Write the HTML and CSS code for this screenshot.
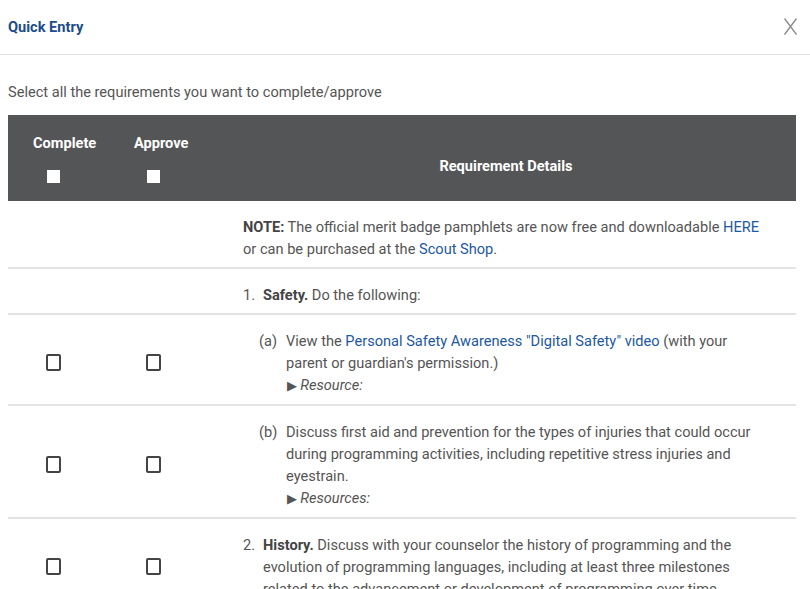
FILE: index.html
```html
<!DOCTYPE html>
<html lang="en">
<head>
    <meta charset="UTF-8">
    <meta name="viewport" content="width=device-width, initial-scale=1.0">
    <title>Quick Entry</title>
    <link rel="stylesheet" href="styles.css">
</head>
<body>
    <div class="modal">
        <div class="modal-header">
            <h1>Quick Entry</h1>
            <button class="close-btn" aria-label="Close">
                <svg width="13" height="17" viewBox="0 0 13 17">
                    <path d="M0.5 0.5 L12.5 16.5 M12.5 0.5 L0.5 16.5" stroke="#8a8a8a" stroke-width="1.3" fill="none"/>
                </svg>
            </button>
        </div>

        <p class="intro">Select all the requirements you want to complete/approve</p>

        <table class="req-table">
            <thead>
                <tr>
                    <th class="col-check">
                        <div class="th-label">Complete</div>
                        <span class="head-box"></span>
                    </th>
                    <th class="col-check col-approve">
                        <div class="th-label">Approve</div>
                        <span class="head-box"></span>
                    </th>
                    <th class="col-details">Requirement Details</th>
                </tr>
            </thead>
            <tbody>
                <tr>
                    <td></td>
                    <td></td>
                    <td class="details"><b>NOTE:</b> The official merit badge pamphlets are now free and downloadable <a href="#">HERE</a><br>or can be purchased at the <a href="#">Scout Shop</a>.</td>
                </tr>
                <tr>
                    <td></td>
                    <td></td>
                    <td class="details">
                        <div class="req"><span class="num">1.</span><div><b>Safety.</b> Do the following:</div></div>
                    </td>
                </tr>
                <tr>
                    <td class="cell-check"><span class="box"></span></td>
                    <td class="cell-check"><span class="box"></span></td>
                    <td class="details sub">
                        <div class="req"><span class="num">(a)</span><div>View the <a href="#">Personal Safety Awareness "Digital Safety" video</a> (with your parent or guardian's permission.)
                            <div class="resource">&#9654; <i>Resource:</i></div></div></div>
                    </td>
                </tr>
                <tr>
                    <td class="cell-check"><span class="box"></span></td>
                    <td class="cell-check"><span class="box"></span></td>
                    <td class="details sub">
                        <div class="req"><span class="num">(b)</span><div>Discuss first aid and prevention for the types of injuries that could occur during programming activities, including repetitive stress injuries and eyestrain.
                            <div class="resource">&#9654; <i>Resources:</i></div></div></div>
                    </td>
                </tr>
                <tr>
                    <td class="cell-check"><span class="box"></span></td>
                    <td class="cell-check"><span class="box"></span></td>
                    <td class="details">
                        <div class="req"><span class="num">2.</span><div><b>History.</b> Discuss with your counselor the history of programming and the evolution of programming languages, including at least three milestones related to the advancement or development of programming over time.</div></div>
                    </td>
                </tr>
            </tbody>
        </table>
    </div>
</body>
</html>
```

FILE: styles.css
```css
* {
    margin: 0;
    padding: 0;
    box-sizing: border-box;
}

body {
    background-color: #fff;
    font-family: Roboto, "Liberation Sans", Arial, sans-serif;
    font-size: 14.6px;
    color: #555;
    overflow: hidden;
}

.modal {
    width: 810px;
}

.modal-header {
    height: 55px;
    display: flex;
    align-items: center;
    justify-content: space-between;
    padding: 0 13px 1px 8px;
    border-bottom: 1px solid #e2e2e2;
}

.modal-header h1 {
    font-size: 14.6px;
    font-weight: bold;
    color: #1c4c8c;
}

.close-btn {
    background: none;
    border: none;
    display: flex;
    cursor: pointer;
}

.intro {
    padding: 27px 8px 0;
    line-height: 20px;
    height: 60px;
}

.req-table {
    width: 788px;
    margin-left: 8px;
    border-collapse: collapse;
}

.req-table thead tr {
    background-color: #545557;
    color: #fff;
    height: 86px;
}

.req-table th {
    font-size: 14.6px;
    font-weight: bold;
}

.col-check {
    width: 100px;
    text-align: left;
    vertical-align: top;
    padding: 20px 0 0 25px;
}

.col-approve {
    width: 108px;
    padding-left: 26px;
}

.th-label {
    line-height: 17px;
}

.head-box {
    display: block;
    width: 13px;
    height: 13px;
    background: #fff;
    margin: 18px 0 0 14px;
}

.col-approve .head-box {
    margin-left: 13px;
}

.col-details {
    text-align: center;
    vertical-align: middle;
    padding-top: 16px;
}

.req-table tbody tr {
    border-bottom: 2px solid #e4e4e4;
}

.req-table td {
    vertical-align: middle;
}

.cell-check {
    padding: 6px 0 0 38px;
}

.box {
    display: block;
    width: 15px;
    height: 17px;
    border: 2px solid #444;
    border-radius: 2px;
}

.details {
    padding: 15px 30px 7px 27px;
    line-height: 22px;
}

.details b {
    color: #444;
}

.details a {
    color: #1d58a3;
    text-decoration: none;
}

.req {
    display: flex;
}

.num {
    flex: none;
    width: 20px;
}

.sub {
    padding-left: 43px;
}

.sub .num {
    width: 27px;
}

.resource {
    font-size: 13px;
    color: #555;
    padding-left: 1px;
}

.resource i {
    font-size: 14.6px;
}
```
